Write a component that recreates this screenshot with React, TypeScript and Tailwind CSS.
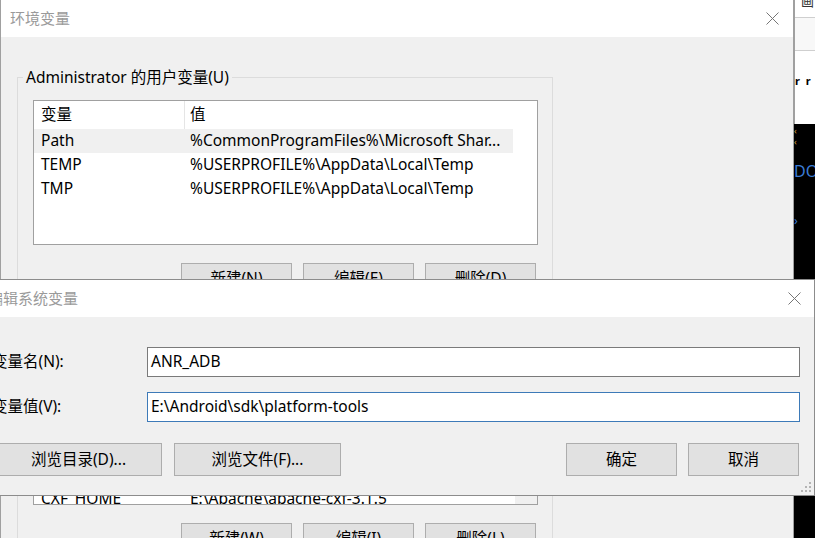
import React from 'react';

const FONT = "font-['Noto_Sans','Noto_Sans_CJK_SC',sans-serif]";

type Row = { name: string; value: string; selected?: boolean };

const USER_VARS: Row[] = [
  { name: 'Path', value: '%CommonProgramFiles%\\Microsoft Shar...', selected: true },
  { name: 'TEMP', value: '%USERPROFILE%\\AppData\\Local\\Temp' },
  { name: 'TMP', value: '%USERPROFILE%\\AppData\\Local\\Temp' },
];

const SYSTEM_VARS: Row[] = [
  { name: 'ComSpec', value: 'C:\\Windows\\system32\\cmd.exe' },
  { name: 'CXF_HOME', value: 'E:\\Apache\\apache-cxf-3.1.5' },
];

const CloseX = () => (
  <svg width="13" height="13" viewBox="0 0 13 13">
    <path d="M0.5 0.5 L12.5 12.5 M12.5 0.5 L0.5 12.5" stroke="#767676" strokeWidth="1" />
  </svg>
);

const Btn = ({ label, w, h }: { label: string; w: string; h: string }) => (
  <div className={`${w} ${h} shrink-0 flex items-center justify-center bg-[#e1e1e1] border border-[#adadad] text-[15.5px] text-black`}>
    {label}
  </div>
);

const ListRow = ({ row, last }: { row: Row; last?: boolean }) => (
  <div className={`h-[24px] w-[479px] shrink-0 flex items-center ${row.selected ? 'bg-[#f0f0f0]' : ''} ${last ? 'mb-[-7px]' : ''}`}>
    <div className="w-[151px] pl-[7px] whitespace-nowrap">{row.name}</div>
    <div className="pl-[5px] whitespace-nowrap">{row.value}</div>
  </div>
);

const VarGroup = ({
  title,
  rows,
  listH,
  buttons,
  bottomAligned,
  className,
}: {
  title: string;
  rows: Row[];
  listH: string;
  buttons: string[];
  bottomAligned?: boolean;
  className: string;
}) => (
  <fieldset className={`${className} w-[536px] border border-[#dcdcdc] pl-[15px] pr-[14px] pb-[12px]`}>
    <legend className="ml-[-10px] px-[3px] leading-[20px] text-[15.5px] text-black">{title}</legend>
    <div className={`mt-[13px] w-[505px] ${listH} border border-[#a0a0a0] bg-white flex`}>
      <div className={`flex-1 flex flex-col overflow-hidden text-[15.5px] text-black ${bottomAligned ? 'justify-end' : ''}`}>
        {!bottomAligned && (
          <div className="h-[28px] w-[479px] shrink-0 flex">
            <div className="w-[151px] pl-[7px] flex items-center border-r border-[#e5e5e5]">变量</div>
            <div className="pl-[5px] flex items-center">值</div>
          </div>
        )}
        {rows.map((r, i) => (
          <ListRow key={r.name} row={r} last={bottomAligned && i === rows.length - 1} />
        ))}
      </div>
      {bottomAligned && <div className="w-[22px] bg-[#f0f0f0]" />}
    </div>
    <div className="mt-[18px] pr-[2px] flex justify-end gap-[11px]">
      {buttons.map((b) => (
        <Btn key={b} label={b} w="w-[111px]" h="h-[32px]" />
      ))}
    </div>
  </fieldset>
);

const EnvWindow = () => (
  <div className="absolute left-0 top-0 w-[794px] h-[600px] border-x border-[#a0a0a0] bg-[#f0f0f0] flex flex-col">
    <div className="h-[37px] shrink-0 bg-white flex items-center justify-between">
      <span className="pl-[9px] text-[15px] text-[#9a9a9a]">环境变量</span>
      <div className="w-[42px] h-full flex items-center justify-center">
        <CloseX />
      </div>
    </div>
    <div className="pl-[16px]">
      <VarGroup
        className="mt-[30px]"
        title="Administrator 的用户变量(U)"
        rows={USER_VARS}
        listH="h-[145px]"
        buttons={['新建(N)', '编辑(E)', '删除(D)']}
      />
      <VarGroup
        className="mt-[10px]"
        title="系统变量(S)"
        rows={SYSTEM_VARS}
        listH="h-[154px]"
        buttons={['新建(W)', '编辑(I)', '删除(L)']}
        bottomAligned
      />
    </div>
  </div>
);

const SideStrip = () => (
  <div className="absolute left-[794px] top-0 w-[21px] h-[538px] flex">
    <div className="w-[5px] bg-[#f0f0f0]" />
    <div className="flex-1 flex flex-col">
      <div className="h-[124px] shrink-0 border-l border-[#a0a0a0] flex flex-col bg-white">
        <div className="h-[18px] border-b border-[#cfcfcf] overflow-hidden">
          <span className="block pl-[6px] mt-[-9px] text-[13px] leading-[20px] text-[#333]">画</span>
        </div>
        <div className="h-[33px] bg-[#f8f8f8] border-b border-[#cfcfcf]" />
        <div className="pt-[24px] text-[11px] leading-[12px] text-black whitespace-nowrap font-bold">r&nbsp;&nbsp;r</div>
      </div>
      <div className="flex-1 bg-black flex flex-col overflow-hidden">
        <span className="mt-[2px] text-[9px] leading-[10px] text-[#d9a441]">‹</span>
        <span className="mt-[1px] text-[9px] leading-[10px] text-[#d9a441]">‹</span>
        <span className="mt-[16px] text-[16px] leading-[16px] text-[#3a7bd5] whitespace-nowrap">DO</span>
        <span className="mt-[36px] text-[12px] leading-[12px] text-[#3a7bd5]">›</span>
      </div>
    </div>
  </div>
);

const EditWindow = () => (
  <div className="absolute left-[-22px] top-[279px] w-[837px] h-[217px] border border-[#8c8c8c] bg-[#f0f0f0] flex flex-col">
    <div className="h-[37px] shrink-0 bg-white flex items-center justify-between">
      <span className="pl-[9px] text-[15px] text-[#9a9a9a] whitespace-nowrap">编辑系统变量</span>
      <div className="w-[40px] h-full flex items-center justify-center">
        <CloseX />
      </div>
    </div>
    <div className="flex flex-col pt-[30px] text-[15.5px] text-black">
      <div className="flex items-center pl-[13px] pr-[14px]">
        <div className="w-[155px] shrink-0 whitespace-nowrap">变量名(N):</div>
        <div className="flex-1 h-[30px] border border-[#7a7a7a] bg-white flex items-center pl-[3px]">ANR_ADB</div>
      </div>
      <div className="mt-[15px] flex items-center pl-[13px] pr-[14px]">
        <div className="w-[155px] shrink-0 whitespace-nowrap">变量值(V):</div>
        <div className="flex-1 h-[30px] border border-[#3d7ab8] bg-white flex items-center pl-[3px]">
          E:\Android\sdk\platform-tools
        </div>
      </div>
      <div className="mt-[21px] flex pl-[16px] pr-[15px]">
        <div className="flex gap-[12px]">
          <Btn label="浏览目录(D)..." w="w-[167px]" h="h-[33px]" />
          <Btn label="浏览文件(F)..." w="w-[167px]" h="h-[33px]" />
        </div>
        <div className="ml-auto flex gap-[11px]">
          <Btn label="确定" w="w-[111px]" h="h-[33px]" />
          <Btn label="取消" w="w-[111px]" h="h-[33px]" />
        </div>
      </div>
    </div>
    <svg className="absolute left-[822px] top-[202px]" width="12" height="12" viewBox="0 0 12 12">
      <g fill="#b4b4b4">
        <rect x="8" y="0" width="2" height="2" />
        <rect x="4" y="4" width="2" height="2" />
        <rect x="8" y="4" width="2" height="2" />
        <rect x="0" y="8" width="2" height="2" />
        <rect x="4" y="8" width="2" height="2" />
        <rect x="8" y="8" width="2" height="2" />
      </g>
    </svg>
  </div>
);

export default function App() {
  return (
    <div className={`relative w-[815px] h-[538px] overflow-hidden bg-[#f0f0f0] ${FONT}`}>
      <EnvWindow />
      <SideStrip />
      <EditWindow />
    </div>
  );
}
